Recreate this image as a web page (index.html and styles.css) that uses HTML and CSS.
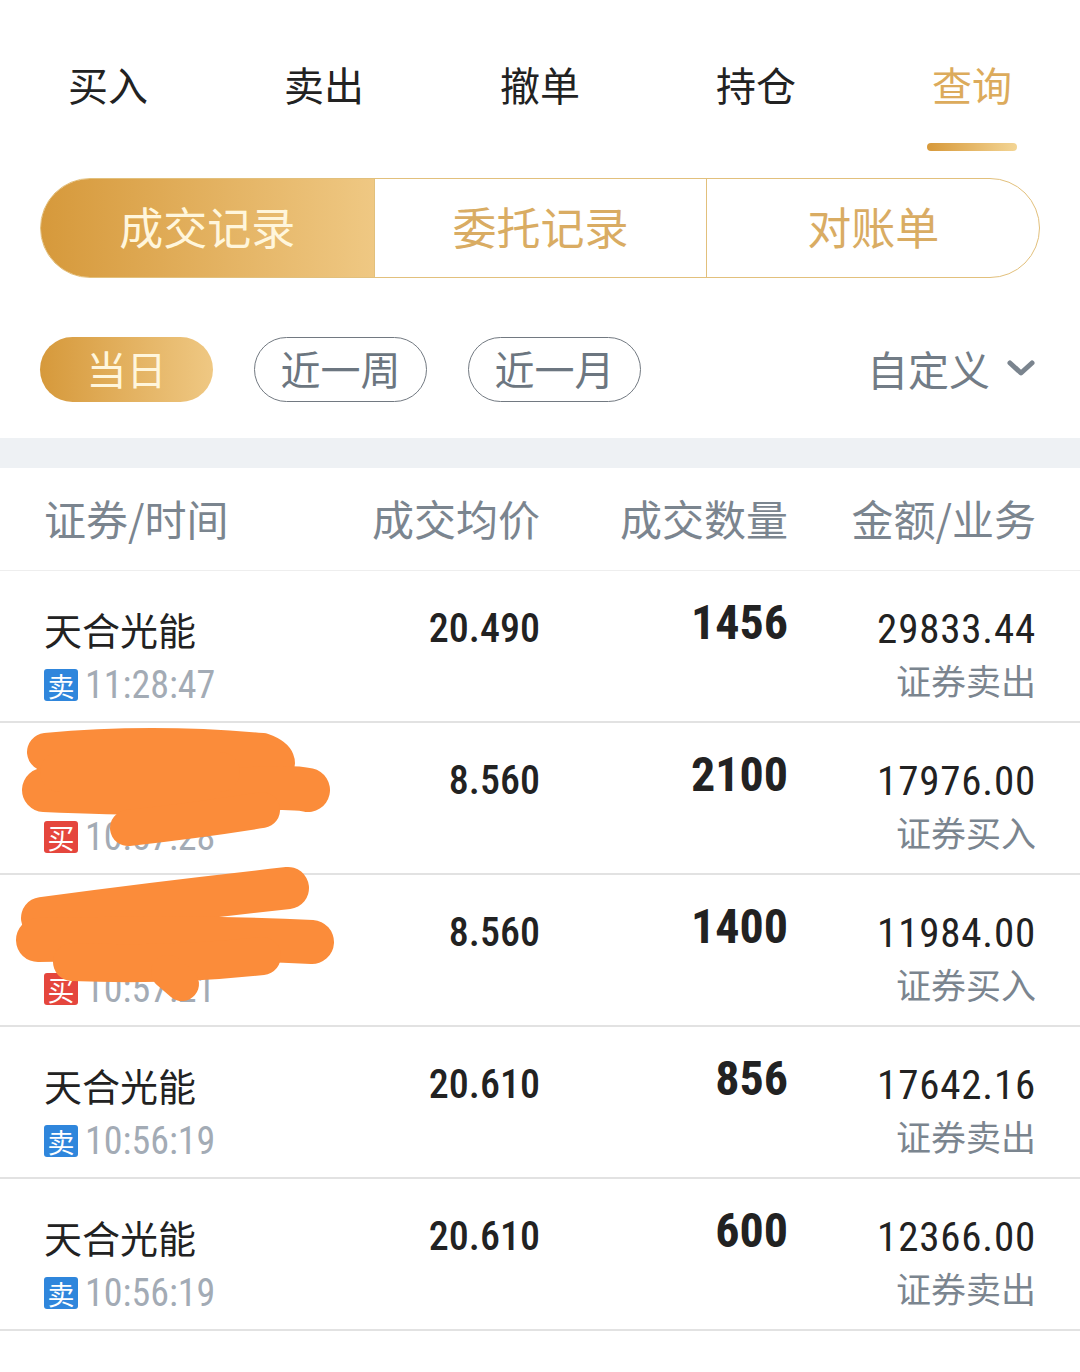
FILE: index.html
```html
<!DOCTYPE html>
<html lang="zh-CN">

<head>
    <meta charset="utf-8">
    <meta name="viewport" content="width=device-width, initial-scale=1">
    <title>查询 - 成交记录</title>
    <link rel="stylesheet" href="styles.css">
</head>

<body>
    <!-- Trade tabs -->
    <nav class="tabs">
        <div class="tab">买入</div>
        <div class="tab">卖出</div>
        <div class="tab">撤单</div>
        <div class="tab">持仓</div>
        <div class="tab active">查询<span class="tab-line"></span></div>
    </nav>

    <!-- Record type switch -->
    <div class="segment">
        <div class="seg active">成交记录</div>
        <div class="seg">委托记录</div>
        <div class="seg">对账单</div>
    </div>

    <!-- Date filters -->
    <div class="filters">
        <div class="pill active">当日</div>
        <div class="pill">近一周</div>
        <div class="pill">近一月</div>
        <div class="custom">自定义
            <svg class="chevron" width="30" height="18" viewBox="0 0 30 18">
                <path d="M4 4 L15 14 L26 4" fill="none" stroke="#7a848e" stroke-width="5" stroke-linecap="round" stroke-linejoin="round" />
            </svg>
        </div>
    </div>

    <div class="band"></div>

    <!-- Trades table -->
    <div class="thead">
        <div>证券/时间</div>
        <div class="r">成交均价</div>
        <div class="r">成交数量</div>
        <div class="r">金额/业务</div>
    </div>

    <div class="row">
        <div class="stock">
            <div class="name">天合光能</div>
            <div class="time"><span class="badge sell">卖</span>11:28:47</div>
        </div>
        <div class="price">20.490</div>
        <div class="qty">1456</div>
        <div class="amount">
            <div class="money">29833.44</div>
            <div class="biz">证券卖出</div>
        </div>
    </div>

    <div class="row">
        <div class="stock">
            <div class="name">&nbsp;</div>
            <div class="time"><span class="badge buy">买</span>10:57:28</div>
        </div>
        <div class="price">8.560</div>
        <div class="qty">2100</div>
        <div class="amount">
            <div class="money">17976.00</div>
            <div class="biz">证券买入</div>
        </div>
    </div>

    <div class="row">
        <div class="stock">
            <div class="name">&nbsp;</div>
            <div class="time"><span class="badge buy">买</span>10:57:21</div>
        </div>
        <div class="price">8.560</div>
        <div class="qty">1400</div>
        <div class="amount">
            <div class="money">11984.00</div>
            <div class="biz">证券买入</div>
        </div>
    </div>

    <div class="row">
        <div class="stock">
            <div class="name">天合光能</div>
            <div class="time"><span class="badge sell">卖</span>10:56:19</div>
        </div>
        <div class="price">20.610</div>
        <div class="qty">856</div>
        <div class="amount">
            <div class="money">17642.16</div>
            <div class="biz">证券卖出</div>
        </div>
    </div>

    <div class="row">
        <div class="stock">
            <div class="name">天合光能</div>
            <div class="time"><span class="badge sell">卖</span>10:56:19</div>
        </div>
        <div class="price">20.610</div>
        <div class="qty">600</div>
        <div class="amount">
            <div class="money">12366.00</div>
            <div class="biz">证券卖出</div>
        </div>
    </div>

    <!-- Hand-drawn redaction marks over two rows -->
    <svg class="scribble" width="1080" height="1372" viewBox="0 0 1080 1372">
        <g fill="none" stroke="#fb8c3a" stroke-linecap="round" stroke-linejoin="round">
            <path d="M46 752 Q150 742 262 752 Q285 760 270 772" stroke-width="38" />
            <path d="M44 790 Q180 796 240 790 Q290 786 308 790" stroke-width="44" />
            <path d="M60 772 L220 772" stroke-width="40" />
            <path d="M128 828 Q200 820 262 810" stroke-width="36" />
            <path d="M42 918 Q160 902 288 888" stroke-width="42" />
            <path d="M38 940 Q200 936 312 942" stroke-width="44" />
            <path d="M72 962 Q170 966 262 956" stroke-width="38" />
            <path d="M168 972 L182 984" stroke-width="34" />
        </g>
    </svg>
</body>

</html>
```

FILE: styles.css
```css
body {
    margin: 0;
    position: relative;
    background-color: #fff;
    font-family: "Noto Sans CJK SC", "Noto Sans", sans-serif;
    color: #222;
}

/* Top tabs */
.tabs {
    display: grid;
    grid-template-columns: repeat(5, 1fr);
    padding-top: 57px;
}

.tab {
    display: flex;
    flex-direction: column;
    align-items: center;
    font-size: 40px;
    line-height: 54px;
    color: #222;
}

.tab.active {
    color: #dcab5c;
}

.tab-line {
    width: 90px;
    height: 8px;
    margin-top: 32px;
    border-radius: 4px;
    background: linear-gradient(90deg, #d7993a, #f3d595);
}

/* Segment switch */
.segment {
    display: grid;
    grid-template-columns: repeat(3, 1fr);
    height: 100px;
    margin: 27px 40px 0 40px;
    border: 1.5px solid #e2c07c;
    border-radius: 50px;
    overflow: hidden;
    box-sizing: border-box;
}

.seg {
    display: flex;
    align-items: center;
    justify-content: center;
    padding-bottom: 4px;
    font-size: 44px;
    color: #d9ac63;
    border-left: 1.5px solid #e2c07c;
}

.seg:first-child {
    border-left: none;
}

.seg.active {
    color: #fff6dc;
    background: linear-gradient(90deg, #d6993b, #efc883);
}

/* Date filters */
.filters {
    display: flex;
    align-items: center;
    gap: 41px;
    padding: 0 44px 0 40px;
    margin-top: 59px;
}

.pill {
    width: 173px;
    height: 65px;
    box-sizing: border-box;
    display: flex;
    align-items: center;
    justify-content: center;
    padding-bottom: 3px;
    font-size: 40px;
    color: #6c7680;
    border: 1.2px solid #727981;
    border-radius: 33px;
}

.pill.active {
    color: #fff6dc;
    border: none;
    background: linear-gradient(90deg, #d6993b, #efc883);
}

.custom {
    margin-left: auto;
    display: flex;
    align-items: center;
    gap: 16px;
    padding-bottom: 3px;
    font-size: 41px;
    color: #727c86;
}

.band {
    height: 30px;
    margin-top: 36px;
    background-color: #eef1f4;
}

/* Table */
.thead,
.row {
    display: grid;
    grid-template-columns: 286px 210px 248px 248px;
    padding: 0 44px;
}

.thead {
    height: 103px;
    align-items: center;
    padding-bottom: 3px;
    box-sizing: border-box;
    font-size: 42px;
    color: #7b858f;
    border-bottom: 1.5px solid #eeeeee;
}

.r {
    text-align: right;
}

.row {
    padding-top: 30px;
    padding-bottom: 8px;
    height: 112px;
    border-bottom: 2px solid #e2e2e2;
}

.name {
    font-size: 38px;
    line-height: 56px;
    color: #222;
}

.time {
    display: flex;
    align-items: center;
    height: 56px;
    font-family: "Roboto Condensed", Roboto, sans-serif;
    font-size: 38px;
    color: #a3abb5;
}

.badge {
    width: 34px;
    height: 32px;
    margin-right: 7px;
    display: flex;
    align-items: center;
    justify-content: center;
    border-radius: 3px;
    font-family: "Noto Sans CJK SC", sans-serif;
    font-size: 27px;
    color: #fff;
}

.badge.sell {
    background-color: #2f86dc;
}

.badge.buy {
    background-color: #e5463d;
}

.price,
.qty,
.money {
    font-family: "Roboto Condensed", Roboto, sans-serif;
    text-align: right;
}

.price {
    font-size: 40px;
    line-height: 56px;
    font-weight: 500;
}

.qty {
    font-size: 48px;
    line-height: 44px;
    font-weight: 700;
}

.amount {
    text-align: right;
}

.money {
    font-size: 41px;
    line-height: 56px;
    letter-spacing: 0.8px;
}

.biz {
    font-size: 35px;
    line-height: 46px;
    color: #7b858f;
}

.scribble {
    position: absolute;
    top: 0;
    left: 0;
    pointer-events: none;
}
```
